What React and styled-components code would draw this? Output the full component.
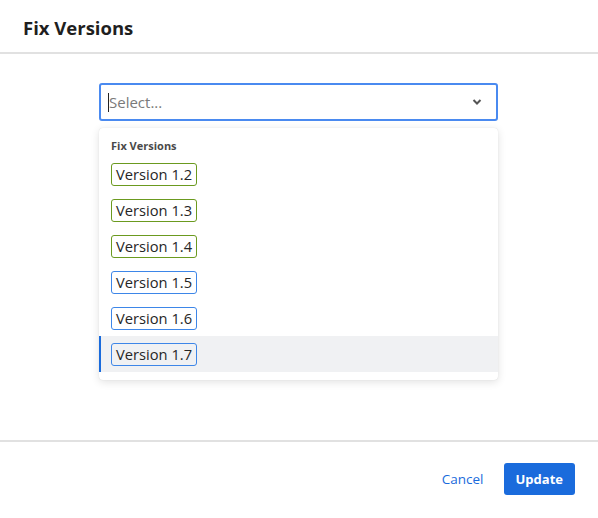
import React from "react";
import styled, { createGlobalStyle } from "styled-components";

const Global = createGlobalStyle`
  html, body { margin: 0; padding: 0; background: #fff; }
  body { font-family: "Open Sans", "Noto Sans", sans-serif; color: #222; }
`;

const Modal = styled.div`
  width: 598px;
  height: 518px;
  display: flex;
  flex-direction: column;
  background: #fff;
`;

const Header = styled.div`
  height: 54px;
  box-sizing: border-box;
  display: flex;
  align-items: center;
  padding: 2px 23px 0;
  border-bottom: 2px solid #e1e1e1;
`;

const Title = styled.h1`
  margin: 0;
  font-size: 18.5px;
  font-weight: 700;
  color: #1f1f1f;
`;

const Body = styled.div`
  flex: 1;
  padding: 29px 100px 0 99px;
  border-bottom: 2px solid #e1e1e1;
`;

const SelectBox = styled.div`
  height: 38px;
  box-sizing: border-box;
  border: 2px solid #4a8af0;
  border-radius: 3px;
  display: flex;
  align-items: center;
  padding: 0 14px 0 7px;
`;

const Caret = styled.span`
  width: 1px;
  height: 19px;
  background: #222;
`;

const Placeholder = styled.span`
  flex: 1;
  font-size: 15px;
  color: #7a7a7a;
`;

const Menu = styled.div`
  margin-top: 7px;
  background: #fff;
  border-radius: 4px;
  box-shadow: 0 2px 8px rgba(0, 0, 0, 0.12), 0 0 1px rgba(0, 0, 0, 0.15);
  padding-bottom: 8px;
`;

const GroupHeading = styled.div`
  height: 28px;
  box-sizing: border-box;
  padding: 10px 12px 0;
  font-size: 11px;
  font-weight: 700;
  color: #4a4a4a;
`;

const Option = styled.div`
  height: 36px;
  display: flex;
  align-items: center;
  box-sizing: border-box;
  padding-left: ${(p) => (p.$active ? "10px" : "12px")};
  border-left: ${(p) => (p.$active ? "2px solid #1a6bdc" : "none")};
  background: ${(p) => (p.$active ? "#f0f1f3" : "transparent")};
`;

const Tag = styled.span`
  height: 23px;
  box-sizing: border-box;
  display: inline-flex;
  align-items: center;
  padding: 0 4px;
  border: 1px solid ${(p) => (p.$tone === "green" ? "#6b9a1f" : "#3d86e8")};
  border-radius: 3px;
  font-size: 14.7px;
  color: #262626;
`;

const Footer = styled.div`
  height: 76px;
  box-sizing: border-box;
  display: flex;
  align-items: center;
  justify-content: flex-end;
  gap: 20px;
  padding: 0 23px 2px;
`;

const LinkButton = styled.button`
  border: none;
  background: none;
  padding: 0;
  font-family: inherit;
  font-size: 13.5px;
  color: #1a6bdc;
`;

const PrimaryButton = styled.button`
  height: 32px;
  border: none;
  border-radius: 3px;
  background: #1a6bdc;
  color: #fff;
  font-family: inherit;
  font-size: 13px;
  font-weight: 700;
  padding: 0 12px;
`;

const Chevron = () => (
  <svg width="10" height="8" viewBox="0 0 10 8">
    <path d="M1.5 2 L5 5.5 L8.5 2" fill="none" stroke="#555" strokeWidth="2" />
  </svg>
);

const versions = [
  { v: "1.2", tone: "green" },
  { v: "1.3", tone: "green" },
  { v: "1.4", tone: "green" },
  { v: "1.5", tone: "blue" },
  { v: "1.6", tone: "blue" },
  { v: "1.7", tone: "blue", active: true },
];

export default function App() {
  return (
    <>
      <Global />
      <Modal>
        <Header>
          <Title>Fix Versions</Title>
        </Header>
        <Body>
          <SelectBox>
            <Caret />
            <Placeholder>Select...</Placeholder>
            <Chevron />
          </SelectBox>
          <Menu>
            <GroupHeading>Fix Versions</GroupHeading>
            {versions.map((o) => (
              <Option key={o.v} $active={o.active}>
                <Tag $tone={o.tone}>Version {o.v}</Tag>
              </Option>
            ))}
          </Menu>
        </Body>
        <Footer>
          <LinkButton>Cancel</LinkButton>
          <PrimaryButton>Update</PrimaryButton>
        </Footer>
      </Modal>
    </>
  );
}
